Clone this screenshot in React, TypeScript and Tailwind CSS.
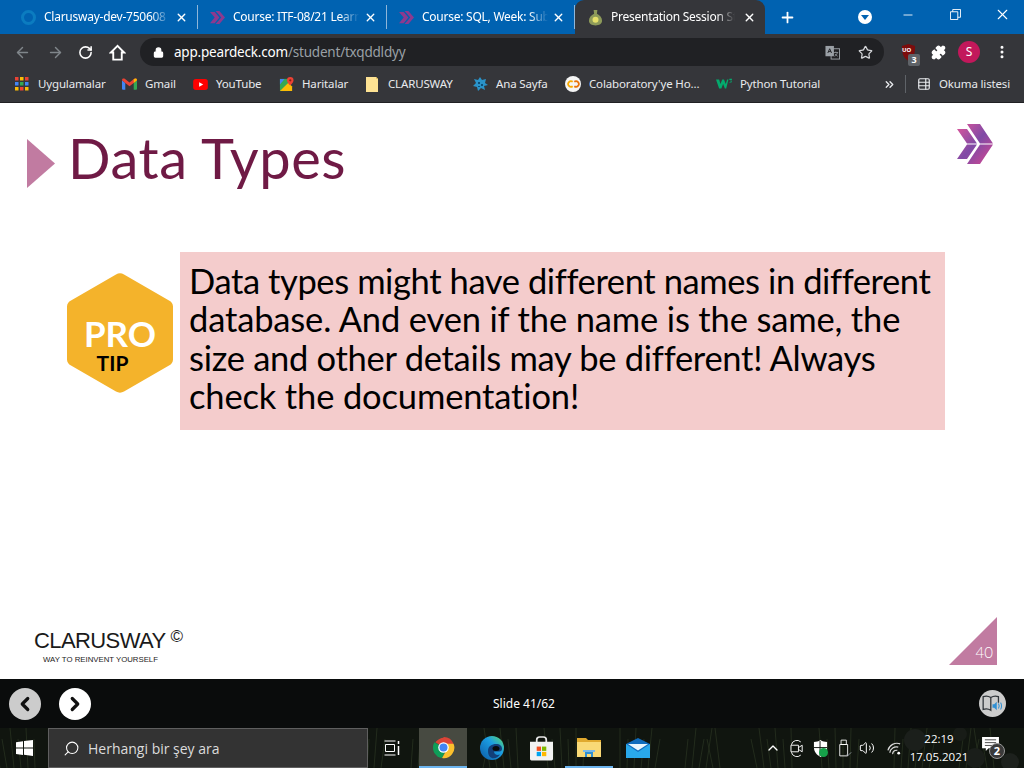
import React from 'react';
import { ArrowLeft, ArrowRight, RotateCw, Lock, Star, Plus, X, Minus, MoreVertical, Puzzle, ChevronUp, ChevronLeft, ChevronRight, Search, Volume2, TableProperties, ChevronsRight } from 'lucide-react';

const ChevronLogo = ({ className = '' }: { className?: string }) => (
  <svg viewBox="0 0 36 40" className={className}>
    <defs>
      <linearGradient id="chev" x1="0" y1="0" x2="1" y2="1">
        <stop offset="0" stopColor="#e0559a" />
        <stop offset="0.5" stopColor="#7f4aa6" />
        <stop offset="1" stopColor="#d9478f" />
      </linearGradient>
    </defs>
    <path d="M0 5h10l10 14.500H10zM10 20.500h10L10 35H0zM10 0h13l13 19.500H23zM23 20.500h13L23 40H10z" fill="url(#chev)" />
  </svg>
);

const TabChevron = () => (
  <svg viewBox="0 0 16 16" className="w-[15px] h-[15px] shrink-0">
    <path d="M0 2h5l5 6-5 6H0l5-6zM6 1h4l6 7-6 7H6l6-7z" fill="#8c3a8f" />
  </svg>
);

const PearIcon = () => (
  <svg viewBox="0 0 16 18" className="w-[15px] h-[17px] shrink-0">
    <path d="M6 1h4L9.500 5c3 1.500 5.500 4 5.500 7.500 0 3-3 5-7 5s-7-2-7-5C1 9 3.500 6.500 6.500 5z" fill="#8d9a5a" />
    <circle cx="8" cy="11.500" r="3.200" fill="#e5e06a" />
  </svg>
);

const RingIcon = () => (
  <span className="w-[15px] h-[15px] rounded-full border-[3px] border-[#0b7cc0] shrink-0" />
);

const tabs = [
  { title: 'Clarusway-dev-750608', icon: <RingIcon />, width: 'w-[189px]' },
  { title: 'Course: ITF-08/21 Learn', icon: <TabChevron />, width: 'w-[189px]' },
  { title: 'Course: SQL, Week: Sub', icon: <TabChevron />, width: 'w-[188px]' },
];

const GridIcon = () => (
  <svg viewBox="0 0 14 14" className="w-[14px] h-[14px]">
    {[0, 5, 10].map((y, r) =>
      [0, 5, 10].map((x, c) => (
        <rect key={`${r}${c}`} x={x} y={y} width="3.500" height="3.500" fill={['#ea4335', '#4285f4', '#fbbc05', '#34a853'][(r + c * 2) % 4]} />
      ))
    )}
  </svg>
);

const GmailIcon = () => (
  <svg viewBox="0 0 16 12" className="w-[15px] h-[12px]">
    <path d="M0 2v9a1 1 0 0 0 1 1h2.500V5z" fill="#4285f4" />
    <path d="M16 2v9a1 1 0 0 1-1 1h-2.500V5z" fill="#34a853" />
    <path d="M0 2l3.500 3L8 8.500 12.500 5 16 2c0-2-1.500-2.500-3-1.500L8 4.500 3 .5C1.500-.5 0 0 0 2z" fill="#ea4335" />
    <path d="M12.500 1v4L16 2c0-2-2-2.200-3.500-1z" fill="#fbbc05" />
  </svg>
);

const YoutubeIcon = () => (
  <svg viewBox="0 0 16 12" className="w-[15px] h-[11px]">
    <rect width="16" height="12" rx="3" fill="#f00" />
    <path d="M6.500 3.500L11 6l-4.500 2.500z" fill="#fff" />
  </svg>
);

const MapsIcon = () => (
  <svg viewBox="0 0 16 16" className="w-[15px] h-[15px]">
    <path d="M1 2h9v13H1z" fill="#34a853" />
    <path d="M1 15L10 6l4 4v5z" fill="#fbbc05" />
    <path d="M1 2h5L1 8z" fill="#4285f4" />
    <path d="M12 0a3.500 3.500 0 0 1 3.500 3.500C15.500 6 12 9 12 9S8.500 6 8.500 3.500A3.500 3.500 0 0 1 12 0z" fill="#ea4335" />
    <circle cx="12" cy="3.500" r="1.200" fill="#8c1c13" />
  </svg>
);

const NoteIcon = () => (
  <svg viewBox="0 0 12 15" className="w-[12px] h-[15px]">
    <path d="M0 0h10l2 2v13H0z" fill="#fde293" />
    <path d="M10 0l2 2h-2z" fill="#e8c65e" />
  </svg>
);

const SplashIcon = () => (
  <svg viewBox="0 0 16 16" className="w-[16px] h-[16px]">
    <path d="M8 1l2 3 4-1-1 4 3 2-4 1 1 4-4-2-3 3-1-4-4-1 3-3-2-4 4 1z" fill="#2a93c9" />
    <path d="M6 6h2v2H6zM9 8h2v2H9zM6 10h2v1H6z" fill="#0c4f78" />
  </svg>
);

const ColabIcon = () => (
  <span className="w-[16px] h-[16px] rounded-full bg-[#f5f5f5] flex items-center justify-center">
    <svg viewBox="0 0 16 10" className="w-[13px] h-[8px]">
      <path d="M7 2.200A3.500 3.500 0 1 0 7 7.800" fill="none" stroke="#f9ab00" strokeWidth="2.200" />
      <path d="M9 2.200A3.500 3.500 0 1 1 9 7.800" fill="none" stroke="#e8710a" strokeWidth="2.200" />
    </svg>
  </span>
);

const W3Icon = () => (
  <svg viewBox="0 0 18 12" className="w-[17px] h-[12px]">
    <path d="M0 1h3.500L5 6l2-5h2l2 5 1.500-5H14l-2.500 10H10L8 6l-2 5H3.500z" fill="#04aa6d" />
    <path d="M15 0h3v1l-1 1c1 .2 1 2.500-.5 2.500H15V4h1.500c.5 0 .5-1-.5-1v-.5l1-1h-2z" fill="#04aa6d" />
  </svg>
);

const bookmarks = [
  { label: 'Uygulamalar', icon: <GridIcon />, width: 'w-[107px]' },
  { label: 'Gmail', icon: <GmailIcon />, width: 'w-[71px]' },
  { label: 'YouTube', icon: <YoutubeIcon />, width: 'w-[86px]' },
  { label: 'Haritalar', icon: <MapsIcon />, width: 'w-[86px]' },
  { label: 'CLARUSWAY', icon: <NoteIcon />, width: 'w-[108px]' },
  { label: 'Ana Sayfa', icon: <SplashIcon />, width: 'w-[93px]' },
  { label: "Colaboratory'ye Ho...", icon: <ColabIcon />, width: 'w-[151px]' },
  { label: 'Python Tutorial', icon: <W3Icon />, width: 'w-[167px]' },
];

const TranslateIcon = () => (
  <svg viewBox="0 0 16 16" className="w-[15px] h-[15px]">
    <rect x="0.500" y="1" width="9" height="11" fill="#9aa0a6" />
    <rect x="6.500" y="4" width="9" height="11" fill="none" stroke="#9aa0a6" />
    <path d="M3 8.500L5 4l2 4.500M3.800 7h2.400" stroke="#202124" fill="none" />
    <path d="M9 8h5M11.500 7v1M10 12c2-1 3-2 3-4M10.500 9.500c1 1.200 2 2 3 2.500" stroke="#9aa0a6" fill="none" strokeWidth="0.800" />
  </svg>
);

const HomeOutline = () => (
  <svg viewBox="0 0 18 18" className="w-[17px] h-[17px] ml-[16px]" fill="none" stroke="#fff" strokeWidth="2">
    <path d="M9 2L2 9h2.500v7.500h9V9H16z" strokeLinejoin="miter" />
  </svg>
);

const UblockIcon = () => (
  <span className="relative w-[18px] h-[18px] flex items-center justify-center">
    <svg viewBox="0 0 16 18" className="w-[15px] h-[17px]">
      <path d="M8 0l7 2c0 8-1 12-7 16C2 14 1 10 1 2z" fill="#7c0c0c" />
    </svg>
    <span className="absolute top-[4px] left-[3px] text-[6px] leading-[7px] font-bold text-white">UO</span>
    <span className="absolute left-[9px] top-[11px] w-[12px] h-[12px] rounded-[2px] bg-[#5f6368] text-white text-[9px] leading-[12px] text-center font-bold">3</span>
  </span>
);

const WindowsLogo = () => (
  <svg viewBox="0 0 17 16" className="w-[17px] h-[16px]">
    <path d="M0 2.300l7-1v6.300H0zM8 1.100L17 0v7.600H8zM0 8.500h7v6.400l-7-1zM8 8.500h9V16l-9-1.200z" fill="#fff" />
  </svg>
);

const TaskView = () => (
  <svg viewBox="0 0 16 16" className="w-[16px] h-[16px]" fill="none" stroke="#fff">
    <path d="M0.500 1h11M0.500 15h11M1.500 4.500h9v7h-9z" />
    <path d="M14.500 1v3M14.500 6v9" strokeWidth="1.500" />
  </svg>
);

const ChromeIcon = () => (
  <svg viewBox="0 0 24 24" className="w-[23px] h-[23px]">
    <path d="M12 12L3.500 6.500A11 11 0 0 1 22 7.500H12z" fill="#db4437" />
    <path d="M12 1a11 11 0 0 1 10.500 7.500H12z" fill="#db4437" />
    <path d="M2.500 6.500A11 11 0 0 0 10.500 23L15 14 12 12z" fill="#0f9d58" />
    <path d="M22.500 8A11 11 0 0 1 10.500 23L16 13l-2-5z" fill="#fbc02d" />
    <circle cx="12" cy="12" r="5.500" fill="#fff" />
    <circle cx="12" cy="12" r="4.200" fill="#4285f4" />
  </svg>
);

const EdgeIcon = () => (
  <svg viewBox="0 0 24 24" className="w-[24px] h-[24px]">
    <defs>
      <linearGradient id="edge" x1="0" y1="1" x2="1" y2="0">
        <stop offset="0" stopColor="#0c59a4" />
        <stop offset="0.600" stopColor="#1b9de2" />
        <stop offset="1" stopColor="#5fdc6a" />
      </linearGradient>
    </defs>
    <circle cx="12" cy="12" r="12" fill="url(#edge)" />
    <path d="M8 15c0-5 4-7 8-7 4 0 6 2 6 5 0 1.500-1 2.500-2.500 2.500H14c0 3 3 4 6 3-3 5-12 6-12-3.500z" fill="#123f7a" />
    <ellipse cx="16" cy="12.500" rx="3.500" ry="2.500" fill="#0a0c0c" />
  </svg>
);

const StoreIcon = () => (
  <svg viewBox="0 0 24 26" className="w-[23px] h-[25px]">
    <path d="M7 7V4a3 3 0 0 1 3-3h4a3 3 0 0 1 3 3v3" fill="none" stroke="#e6e6e6" strokeWidth="1.800" />
    <path d="M0 6h24v18a1.500 1.500 0 0 1-1.500 1.500h-21A1.500 1.500 0 0 1 0 24z" fill="#f2f2f2" />
    <rect x="7" y="11" width="4.500" height="4.500" fill="#f25022" />
    <rect x="12.500" y="11" width="4.500" height="4.500" fill="#7fba00" />
    <rect x="7" y="16.500" width="4.500" height="4.500" fill="#00a4ef" />
    <rect x="12.500" y="16.500" width="4.500" height="4.500" fill="#ffb900" />
  </svg>
);

const FolderIcon = () => (
  <svg viewBox="0 0 24 20" className="w-[24px] h-[20px]">
    <path d="M0 1h9l2 2h13v17H0z" fill="#e0a92e" />
    <path d="M0 5h24v15H0z" fill="#f9d976" />
    <path d="M8 14h8v6h-2v-3h-4v3H8z" fill="#2f8fd3" />
    <path d="M6 13h12v2H6z" fill="#7ab9e8" />
  </svg>
);

const MailIcon = () => (
  <svg viewBox="0 0 24 20" className="w-[24px] h-[20px]">
    <path d="M0 6L12 0l12 6v14H0z" fill="#0f6cbd" />
    <path d="M0 6l12 8 12-8v14H0z" fill="#29a8ea" />
    <path d="M2 6h20l-10 6.500z" fill="#e8f6fd" />
  </svg>
);

const MeetIcon = () => (
  <svg viewBox="0 0 16 18" className="w-[15px] h-[17px] ml-[9px]" fill="none" stroke="#fff">
    <path d="M1.500 5a6 6 0 0 1 10-3M1.500 13a6 6 0 0 0 10 3" />
    <path d="M1 5.500h8v7H1zM9 8l4-2.500v7L9 10" />
  </svg>
);

const ShieldIcon = () => (
  <span className="relative w-[17px] h-[18px]">
    <svg viewBox="0 0 16 18" className="w-[15px] h-[17px]">
      <path d="M8 0c2 1.500 4.500 2 7 2v6c0 4.500-3 8-7 10-4-2-7-5.500-7-10V2c2.500 0 5-.5 7-2z" fill="#fff" />
      <path d="M7.500 1v16M1 8h14" stroke="#0f140e" />
    </svg>
    <span className="absolute right-0 bottom-0 w-[9px] h-[9px] rounded-full bg-[#16a34a]" />
  </span>
);

const UsbTray = () => (
  <svg viewBox="0 0 16 20" className="w-[14px] h-[18px]" fill="none" stroke="#fff">
    <path d="M3.500 1h6v5h-6zM2 6h9v13H2z" />
    <path d="M10 17l1.500 1.500L15 15" stroke="#9ca3af" />
  </svg>
);

const WifiTray = () => (
  <svg viewBox="0 0 16 16" className="w-[15px] h-[15px] ml-[12px]" fill="none" stroke="#d8d8d8" strokeWidth="1.300">
    <path d="M1 10a10 10 0 0 1 13-7M3 12.500a7 7 0 0 1 9-6M6 14a4 4 0 0 1 5-4" />
    <circle cx="12.500" cy="13" r="1.500" fill="#fff" stroke="none" />
  </svg>
);

const NotifIcon = () => (
  <span className="relative ml-[10px] w-[24px] h-[24px]">
    <svg viewBox="0 0 18 16" className="w-[17px] h-[15px] mt-[1px]">
      <path d="M0 0h18v12H7l-3 3v-3H0z" fill="#fff" />
      <path d="M3 3h12M3 6h12M3 9h8" stroke="#444" />
    </svg>
    <span className="absolute left-[7px] top-[7px] w-[16px] h-[16px] rounded-full bg-[#3a3a3a] border border-[#999] text-[11px] leading-[14px] text-center font-bold">2</span>
  </span>
);

const BookSpeaker = () => (
  <svg viewBox="0 0 24 20" className="w-[21px] h-[17px]" fill="none">
    <path d="M1 2c3-1 6-1 9 1v15c-3-2-6-2-9-1zM10 3c3-2 6-2 9-1v7" stroke="#30353a" strokeWidth="1.500" />
    <path d="M12 11h2l3-3v10l-3-3h-2z" fill="#2f8fd3" />
    <path d="M19 10c1 1.500 1 4 0 6M21.500 9c1.500 2 1.500 6 0 8" stroke="#2f8fd3" strokeWidth="1.200" />
  </svg>
);

// the wallpaper behind the taskbar: dark grass, a few dandelion heads towards the right
const grass = Array.from({ length: 90 }, (_, i) => ({ x: (i * 137) % 1024, lean: ((i * 7) % 13) - 6, top: (i * 11) % 22 }));

const Wallpaper = () => (
  <svg viewBox="0 0 1024 40" className="absolute inset-0 w-[1024px] h-[40px]" fill="none">
    {grass.map((g) => (
      <path key={g.x} d={`M${g.x} 40L${g.x + g.lean} ${g.top}`} stroke="#232c1d" strokeWidth="1" />
    ))}
    <circle cx="915" cy="12" r="11" fill="#1b1f1b" />
    <circle cx="975" cy="30" r="10" fill="#1a1e1a" />
    <circle cx="1010" cy="34" r="9" fill="#1d211d" />
    <circle cx="960" cy="6" r="7" fill="#181c17" />
  </svg>
);

export default function App() {
  return (
    <div className="w-[1024px] h-[768px] flex flex-col overflow-hidden font-['Noto_Sans','Open_Sans',sans-serif] bg-white">
      {/* Tab strip */}
      <header className="h-[34px] bg-[#0062b1] flex items-end pl-[9px] text-[12px] tracking-[-0.25px] text-white shrink-0">
        {tabs.map((t) => (
          <div key={t.title} className={`${t.width} h-[34px] flex items-center pl-[12px] pr-[9px] border-r border-[#6f9fcb] [border-image:linear-gradient(transparent_18%,#8fb6d9_18%,#8fb6d9_82%,transparent_82%)_1]`}>
            <span className="w-[15px] flex justify-center shrink-0">{t.icon}</span>
            <span className="ml-[8px] w-[126px] whitespace-nowrap overflow-hidden [mask-image:linear-gradient(to_right,black_85%,transparent)]">{t.title}</span>
            <X size={13} strokeWidth={2.5} className="ml-auto shrink-0" />
          </div>
        ))}
        <div className="w-[190px] h-[34px] bg-[#35363a] rounded-t-[9px] flex items-center pl-[13px] pr-[9px]">
          <PearIcon />
          <span className="ml-[8px] w-[124px] whitespace-nowrap overflow-hidden [mask-image:linear-gradient(to_right,black_85%,transparent)]">Presentation Session Student</span>
          <X size={13} strokeWidth={2.5} className="ml-auto shrink-0" />
        </div>
        <div className="h-[34px] flex items-center flex-1">
          <Plus size={17} strokeWidth={2.5} className="ml-[14px]" />
          <span className="ml-[62px] w-[14px] h-[14px] rounded-full bg-white flex items-center justify-center">
            <span className="border-x-[4px] border-x-transparent border-t-[5px] border-t-[#0062b1]" />
          </span>
          <Minus size={14} strokeWidth={1.5} className="ml-[29px] mb-[5px]" />
          <svg viewBox="0 0 12 12" className="w-[11px] h-[11px] ml-[35px] mb-[5px]" fill="none" stroke="#fff">
            <path d="M0.500 3h8v8.500h-8zM3 3V0.500h8.500V9H8.500" />
          </svg>
          <X size={17} strokeWidth={1.5} className="ml-[33px] mb-[5px]" />
        </div>
      </header>

      {/* Toolbar */}
      <div className="h-[33px] pt-[3px] bg-[#35363a] flex items-center shrink-0 text-white">
        <ArrowLeft size={17} className="ml-[14px] text-[#80868b]" />
        <ArrowRight size={17} className="ml-[16px] text-[#80868b]" />
        <RotateCw size={15} strokeWidth={2.5} className="ml-[14px]" />
        <HomeOutline />
        <div className="ml-[14px] w-[744px] h-[28px] bg-[#202124] rounded-full flex items-center pl-[13px] pr-[10px]">
          <Lock size={11} fill="#fff" strokeWidth={2.5} />
          <span className="ml-[10px] text-[13.5px] tracking-[-0.2px] text-white">app.peardeck.com<span className="text-[#9aa0a6]">/student/txqddldyy</span></span>
          <span className="ml-auto"><TranslateIcon /></span>
          <Star size={15} strokeWidth={2} className="ml-[18px] mr-[1px] text-[#d5d7da]" />
        </div>
        <span className="ml-[15px]"><UblockIcon /></span>
        <Puzzle size={15} fill="#fff" className="ml-[14px]" />
        <span className="ml-[12px] w-[22px] h-[22px] rounded-full bg-[#c2185b] text-[12px] flex items-center justify-center">S</span>
        <MoreVertical size={16} strokeWidth={2.5} className="ml-[14px]" />
      </div>

      {/* Bookmarks */}
      <nav className="h-[36px] pb-[1px] bg-[#35363a] border-b border-[#202124] flex items-center pl-[14px] text-[11.5px] tracking-[-0.15px] text-[#e8eaed] shrink-0">
        {bookmarks.map((b) => (
          <div key={b.label} className={`${b.width} shrink-0 flex items-center`}>
            <span className="w-[16px] flex justify-center">{b.icon}</span>
            <span className="ml-[8px] whitespace-nowrap">{b.label}</span>
          </div>
        ))}
        <ChevronsRight size={13} strokeWidth={2.5} />
        <span className="ml-[9px] w-px h-[18px] bg-[#5f6368]" />
        <TableProperties size={14} className="ml-[11px]" />
        <span className="ml-[8px] whitespace-nowrap">Okuma listesi</span>
      </nav>

      {/* Slide */}
      <main className="flex-1 bg-white flex flex-col font-['Lato',sans-serif] min-h-0">
        <div className="flex items-start pl-[27px] pr-[31px] pt-[21px]">
          <svg viewBox="0 0 28 49" className="w-[28px] h-[49px] mt-[15px] shrink-0">
            <path d="M0 0l28 24.500L0 49z" fill="#c17ba1" />
          </svg>
          <h1 className="ml-[13px] -mt-[2px] text-[56px] leading-[72px] text-[#6f1a45] tracking-[0.6px]">Data Types</h1>
          <ChevronLogo className="ml-auto w-[36px] h-[40px]" />
        </div>

        <div className="flex items-start pl-[67px] mt-[58px]">
          <div className="relative w-[106px] h-[120px] mt-[21px] shrink-0">
            <svg viewBox="0 0 106 120" className="w-[106px] h-[120px]">
              <path d="M49 1.500a8 8 0 0 1 8 0l45 26a7 7 0 0 1 4 6v53a7 7 0 0 1-4 6l-45 26a8 8 0 0 1-8 0l-45-26a7 7 0 0 1-4-6v-53a7 7 0 0 1 4-6z" fill="#f4b32b" />
            </svg>
            <div className="absolute inset-0 flex flex-col items-center pt-[42px]">
              <span className="text-[35px] leading-[36px] font-bold text-white">PRO</span>
              <span className="text-[21px] leading-[22px] font-bold text-black -ml-[15px] mt-[1px]">TIP</span>
            </div>
          </div>
          <div className="ml-[7px] w-[765px] h-[178px] bg-[#f4cccc] pl-[9px] pt-[10px] text-[34.5px] leading-[38.4px] text-black">
            <p className="whitespace-nowrap tracking-[-0.4px]">Data types might have different names in different</p>
            <p className="whitespace-nowrap tracking-[-0.15px]">database. And even if the name is the same, the</p>
            <p className="whitespace-nowrap tracking-[-0.28px]">size and other details may be different! Always</p>
            <p className="whitespace-nowrap tracking-[-0.15px]">{'check the documenta\u200Ction!'}</p>
          </div>
        </div>

        <div className="mt-auto flex items-end justify-between pl-[34px] pr-[27px] pb-[14px]">
          <div className="flex flex-col font-['Liberation_Sans',sans-serif] text-[#1a1a1a]">
            <div className="flex items-start">
              <span className="text-[22px] leading-[26px] tracking-[-0.6px]">CLARUSWAY</span>
              <span className="ml-[5px] text-[17px] leading-[17px]">©</span>
            </div>
            <span className="ml-[9px] text-[7.8px] leading-[11px] whitespace-nowrap">WAY TO REINVENT YOURSELF</span>
          </div>
          <div className="relative w-[48px] h-[48px]">
            <svg viewBox="0 0 48 48" className="w-[48px] h-[48px]">
              <path d="M48 0v48H0z" fill="#c17ba1" />
            </svg>
            <span className="absolute right-[4px] bottom-[5px] text-[15px] leading-[16px] text-white font-light">40</span>
          </div>
        </div>
      </main>

      {/* Player bar */}
      <div className="h-[49px] bg-[#0a0c0c] flex items-center px-[9px] shrink-0">
        <span className="w-[32px] h-[32px] rounded-full bg-[#cccccc] flex items-center justify-center">
          <ChevronLeft size={22} strokeWidth={3.5} className="text-[#111]" />
        </span>
        <span className="ml-[18px] w-[32px] h-[32px] rounded-full bg-white flex items-center justify-center">
          <ChevronRight size={22} strokeWidth={3.5} className="text-[#111]" />
        </span>
        <span className="ml-[402px] w-[60px] text-center text-[12px] text-white whitespace-nowrap">Slide 41/62</span>
        <span className="ml-auto mr-[9px] w-[27px] h-[27px] rounded-full bg-[#cccccc] flex items-center justify-center">
          <BookSpeaker />
        </span>
      </div>

      {/* Windows taskbar */}
      <footer className="relative h-[40px] bg-[#10150f] shrink-0 text-white">
        <Wallpaper />
        <div className="relative h-[40px] flex items-center">
          <span className="w-[48px] flex justify-center"><WindowsLogo /></span>
          <div className="w-[320px] h-[40px] bg-[#333333] border border-[#5f5f5f] flex items-center pl-[14px]">
            <Search size={17} strokeWidth={1.5} className="-scale-x-100" />
            <span className="ml-[8px] text-[14px] text-[#dcdcdc] font-['Open_Sans',sans-serif]">Herhangi bir şey ara</span>
          </div>
          <span className="w-[51px] pr-[4px] flex justify-center"><TaskView /></span>
          <span className="w-[48px] h-[40px] bg-[#474a41] border-b-2 border-[#6cb4ee] flex items-center justify-center"><ChromeIcon /></span>
          <span className="w-[50px] flex justify-center"><EdgeIcon /></span>
          <span className="w-[48px] flex justify-center"><StoreIcon /></span>
          <span className="w-[48px] h-[40px] border-b-2 border-[#6cb4ee] flex items-center justify-center"><FolderIcon /></span>
          <span className="w-[50px] flex justify-center"><MailIcon /></span>
          <ChevronUp size={16} className="ml-[102px]" />
          <MeetIcon />
          <span className="ml-[8px]"><ShieldIcon /></span>
          <span className="ml-[10px]"><UsbTray /></span>
          <Volume2 size={16} strokeWidth={1.5} className="ml-[7px]" />
          <WifiTray />
          <div className="ml-[4px] w-[66px] flex flex-col items-center text-[11.5px] leading-[18px] font-['Open_Sans',sans-serif]">
            <span>22:19</span>
            <span>17.05.2021</span>
          </div>
          <NotifIcon />
        </div>
      </footer>
    </div>
  );
}
